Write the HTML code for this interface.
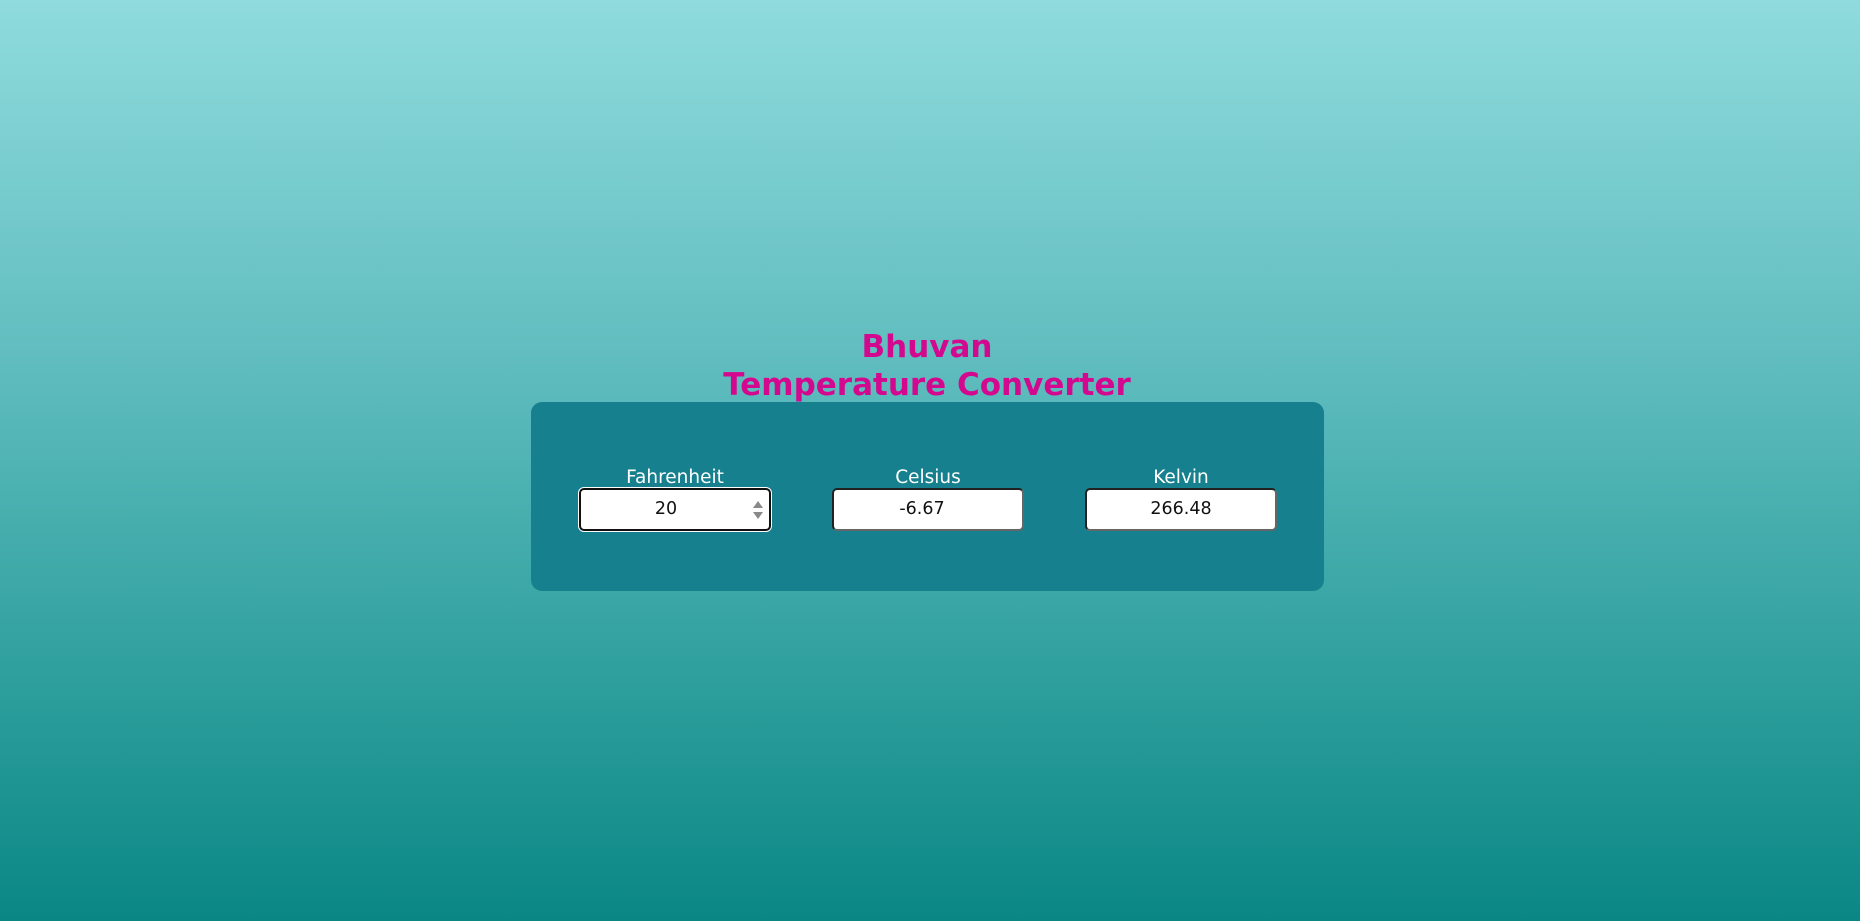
<!DOCTYPE html>
<html><head><style>
html,body{margin:0;padding:0;width:1860px;height:921px;overflow:hidden}
body{background:linear-gradient(to bottom,#8fdbdd 0%,#5fbcbe 40%,#2c9e9c 75%,#0a8785 100%);font-family:"DejaVu Sans","Liberation Sans",sans-serif;position:relative}
.t{position:absolute;left:-3px;width:1860px;text-align:center;color:#d4088f;font-weight:bold;font-size:31px;line-height:38px}
.panel{position:absolute;left:531px;top:402px;width:793px;height:189px;background:#17808e;border-radius:11px}
.col{position:absolute;top:65px;width:192px;text-align:center}
.lab{color:#fff;font-size:18.5px;line-height:22px}
.in{box-sizing:border-box;margin-top:-1px;width:192px;height:43px;background:#fff;border:2px solid #222;border-bottom-color:#666;border-right-color:#666;border-radius:5px;font-size:17.5px;line-height:39px;color:#111;text-align:center;position:relative}
.f{box-shadow:0 0 0 1px #fff;border-color:#111}
.sp{position:absolute;right:6px;top:11px;width:0;height:0;border-left:5px solid transparent;border-right:5px solid transparent;border-bottom:7px solid #888}
.sp2{position:absolute;right:6px;top:22px;width:0;height:0;border-left:5px solid transparent;border-right:5px solid transparent;border-top:7px solid #888}
</style></head><body>
<div class="t" style="top:328px">Bhuvan</div>
<div class="t" style="top:366px">Temperature Converter</div>
<div class="panel">
<div class="col" style="left:48px"><div class="lab">Fahrenheit</div><div class="in f"><span style="margin-left:-18px">20</span><div class="sp"></div><div class="sp2"></div></div></div>
<div class="col" style="left:301px"><div class="lab">Celsius</div><div class="in"><span style="margin-left:-12px">-6.67</span></div></div>
<div class="col" style="left:554px"><div class="lab">Kelvin</div><div class="in">266.48</div></div>
</div>
</body></html>
